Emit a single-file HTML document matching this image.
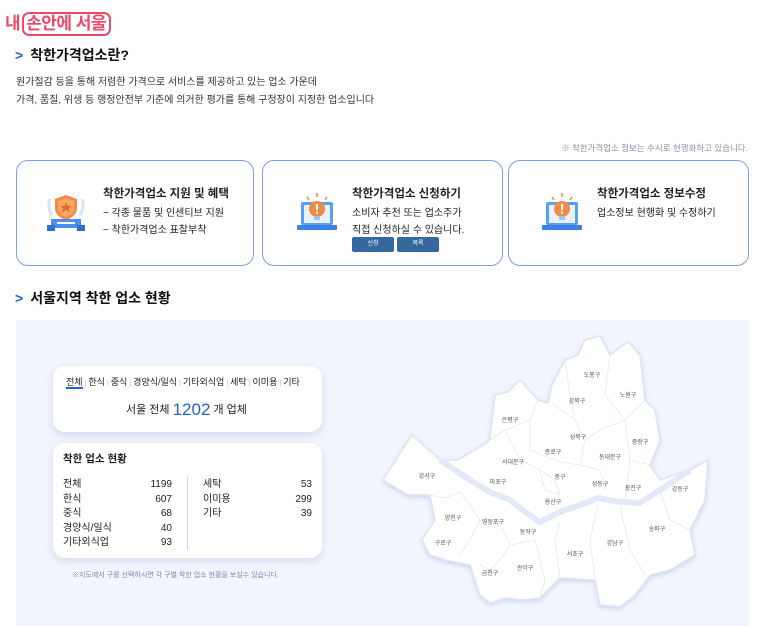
<!DOCTYPE html>
<html><head><meta charset="utf-8"><style>
*{margin:0;padding:0;box-sizing:border-box}
body{width:760px;height:626px;background:#fff;font-family:"Liberation Sans","Noto Sans CJK KR",sans-serif;color:#222;position:relative;overflow:hidden}
.a{position:absolute;white-space:nowrap}
.logo{left:5px;top:9px;font-size:17px;font-weight:bold;color:#ec4a6c;letter-spacing:-0.5px}
.logo span{border:2px solid #ec4a6c;border-radius:7px;padding:0 3px 1px 2px;margin-left:2px}
.h{font-size:14px;font-weight:bold;color:#111}
.h b{color:#2464c8;font-size:14px;margin-right:7px}
.p{font-size:10px;color:#333;line-height:18px}
.card{position:absolute;top:160px;height:106px;border:1.5px solid #7f9cf0;border-radius:12px;background:#fff}
.ct{font-size:11.5px;font-weight:bold;color:#222}
.cs{font-size:10px;color:#222;line-height:17px}
.btn{position:absolute;top:237px;height:15px;width:42px;background:#35699e;color:#fff;font-size:6px;text-align:center;line-height:15px;border-radius:2px}
.map{position:absolute;left:16px;top:320px;width:733px;height:306px;background:#f2f5fd}
.box{position:absolute;background:#fff;border-radius:12px;box-shadow:0 3px 8px rgba(120,140,190,0.25)}
.tb{font-size:9px;color:#222}
.tb i{color:#bbb;font-style:normal;font-size:7px;margin:0 2px}
.row{position:absolute;font-size:10px;color:#222}
.ml{font-size:6px;fill:#555;font-family:"Liberation Sans","Noto Sans CJK KR",sans-serif;text-anchor:middle}
</style></head><body>
<div class="a logo">내<span>손안에 서울</span></div>
<div class="a h" style="left:15px;top:45px"><b>&gt;</b>착한가격업소란?</div>
<div class="a p" style="left:16px;top:74px">원가절감 등을 통해 저렴한 가격으로 서비스를 제공하고 있는 업소 가운데<br>가격, 품질, 위생 등 행정안전부 기준에 의거한 평가를 통해 구청장이 지정한 업소입니다</div>
<div class="a" style="right:12px;top:142px;font-size:8.5px;color:#8a94a6">※ 착한가격업소 정보는 수시로 현행화하고 있습니다.</div>

<div class="card" style="left:16px;width:238px"></div>
<div class="card" style="left:262px;width:241px"></div>
<div class="card" style="left:508px;width:241px"></div>

<svg class="a" style="left:44px;top:191px" width="44" height="42" viewBox="0 0 44 42">
<path d="M6 8q-3 8 2 16M38 8q3 8-2 16" stroke="#d8e3f5" stroke-width="3" fill="none"/>
<path d="M22 4l11 4v9q0 8-11 12q-11-4-11-12V8z" fill="#f38a45"/>
<path d="M22 7l8 3v7q0 6-8 9q-8-3-8-9v-7z" fill="#f9a565"/>
<path d="M22 11l1.8 4h4l-3.2 2.4 1.2 4-3.8-2.5-3.8 2.5 1.2-4-3.2-2.4h4z" fill="#e26a2a"/>
<rect x="7" y="28" width="30" height="9" fill="#4b8ef0"/><rect x="3" y="34" width="8" height="6" fill="#2f6fd3"/><rect x="33" y="34" width="8" height="6" fill="#2f6fd3"/>
<rect x="13" y="31" width="18" height="2" fill="#fff"/></svg>
<div class="a ct" style="left:103px;top:185px">착한가격업소 지원 및 혜택</div>
<div class="a cs" style="left:103px;top:205px">− 각종 물품 및 인센티브 지원<br>− 착한가격업소 표찰부착</div>

<svg class="a" style="left:295px;top:192px" width="44" height="42" viewBox="0 0 44 42">
<rect x="6" y="10" width="32" height="23" rx="2" fill="#5aa0f0"/><rect x="9" y="13" width="26" height="18" fill="#e8f2ff"/>
<rect x="2" y="33" width="40" height="5" rx="1" fill="#3b82e8"/>
<circle cx="22" cy="17" r="8" fill="#f38a45"/><rect x="19" y="24" width="6" height="4" fill="#9cc5f5"/>
<rect x="21" y="12" width="2" height="6" fill="#fff"/><rect x="21" y="19.5" width="2" height="2" fill="#fff"/>
<path d="M22 1v4M12 5l2 3M32 5l-2 3" stroke="#f38a45" stroke-width="1.5"/></svg>
<div class="a ct" style="left:352px;top:185px">착한가격업소 신청하기</div>
<div class="a cs" style="left:352px;top:205px">소비자 추천 또는 업소주가<br>직접 신청하실 수 있습니다.</div>
<div class="btn" style="left:352px">신청</div><div class="btn" style="left:397px">목록</div>

<svg class="a" style="left:540px;top:192px" width="44" height="42" viewBox="0 0 44 42">
<rect x="6" y="10" width="32" height="23" rx="2" fill="#5aa0f0"/><rect x="9" y="13" width="26" height="18" fill="#e8f2ff"/>
<rect x="2" y="33" width="40" height="5" rx="1" fill="#3b82e8"/>
<circle cx="22" cy="17" r="8" fill="#f38a45"/><rect x="19" y="24" width="6" height="4" fill="#9cc5f5"/>
<rect x="21" y="12" width="2" height="6" fill="#fff"/><rect x="21" y="19.5" width="2" height="2" fill="#fff"/>
<path d="M22 1v4M12 5l2 3M32 5l-2 3" stroke="#f38a45" stroke-width="1.5"/></svg>
<div class="a ct" style="left:597px;top:185px">착한가격업소 정보수정</div>
<div class="a cs" style="left:597px;top:205px">업소정보 현행화 및 수정하기</div>

<div class="a h" style="left:15px;top:288px"><b>&gt;</b>서울지역 착한 업소 현황</div>

<div class="map"></div>
<div class="box" style="left:53px;top:366px;width:269px;height:66px"></div>
<div class="a tb" style="left:66px;top:375px">전체<i>|</i>한식<i>|</i>중식<i>|</i>경양식/일식<i>|</i>기타외식업<i>|</i>세탁<i>|</i>이미용<i>|</i>기타</div>
<div class="a" style="left:66px;top:387px;width:17px;height:2px;background:#2464c8"></div>
<div class="a" style="left:126px;top:400px;font-size:11px;color:#222">서울 전체 <span style="font-size:17px;color:#2464c8;vertical-align:-2px">1202</span> 개 업체</div>

<div class="box" style="left:53px;top:443px;width:269px;height:115px"></div>
<div class="a" style="left:63px;top:451px;font-size:10.5px;font-weight:bold">착한 업소 현황</div>
<div class="a" style="left:187px;top:477px;width:1px;height:73px;background:#c9d6ea"></div>
<div class="row" style="left:63px;top:478px;line-height:14.5px">전체<br>한식<br>중식<br>경양식/일식<br>기타외식업</div>
<div class="row" style="left:130px;width:42px;text-align:right;top:478px;line-height:14.5px">1199<br>607<br>68<br>40<br>93</div>
<div class="row" style="left:203px;top:478px;line-height:14.5px">세탁<br>이미용<br>기타</div>
<div class="row" style="left:270px;width:42px;text-align:right;top:478px;line-height:14.5px">53<br>299<br>39</div>
<div class="a" style="left:72px;top:570px;font-size:7px;color:#7a8bb0">※지도에서 구를 선택하시면 각 구별 착한 업소 현황을 보실수 있습니다.</div>

<svg class="a" style="left:0;top:0" width="760" height="626" viewBox="0 0 760 626">
<path d="M383 480L412 435L440 460L458 460L478 448L490 440L495 395L508 392L520 380L538 400L548 403L552 385L565 360L578 355L585 340L600 336L610 355L628 342L640 355L645 400L655 410L660 440L650 465L660 480L690 470L708 460L705 500L690 530L695 555L670 570L650 575L635 595L620 607L600 605L595 580L560 578L540 598L525 600L505 598L490 603L480 595L470 565L445 560L430 555L422 540L435 520L430 495L408 495Z" fill="#fff" stroke="#dfe4f2" stroke-width="1.5" style="filter:drop-shadow(0 2px 2px rgba(140,160,220,0.35))"/>
<path d="M440 460L470 480L490 492L510 500L525 512L540 522L560 512L580 505L598 498L620 502L640 503L660 490L690 470" fill="none" stroke="#e3e9f8" stroke-width="6"/>
<g fill="none" stroke="#e6e8ee" stroke-width="0.8">
<path d="M430 495L445 498L460 492L470 505L480 520L470 540L460 555"/>
<path d="M480 520L500 525L510 545L500 560L490 570L480 565"/>
<path d="M510 545L535 540L540 560L545 580L540 598"/>
<path d="M560 578L555 540L560 522"/>
<path d="M595 580L590 540L598 505"/><path d="M620 507L630 550L645 575"/><path d="M660 490L670 520L690 530"/>
<path d="M490 440L505 430L530 420L538 400"/><path d="M505 430L520 460L540 470L555 480L560 495"/>
<path d="M530 420L530 450L560 462L580 465L585 440L575 420L552 403"/>
<path d="M585 440L600 430L625 420L645 400"/><path d="M580 465L600 470L605 490"/><path d="M625 420L630 460L625 500"/><path d="M630 460L650 465"/>
<path d="M565 360L570 395L575 420"/><path d="M610 355L605 395L625 420"/><path d="M540 470L545 490L560 495"/>
</g>
<g class="ml">
<text x="592" y="377">도봉구</text><text x="628" y="397">노원구</text><text x="577" y="403">강북구</text><text x="510" y="422">은평구</text>
<text x="578" y="439">성북구</text><text x="640" y="444">중랑구</text><text x="553" y="454">종로구</text><text x="610" y="459">동대문구</text>
<text x="513" y="464">서대문구</text><text x="427" y="478">강서구</text><text x="560" y="479">중구</text><text x="498" y="484">마포구</text>
<text x="600" y="486">성동구</text><text x="633" y="490">광진구</text><text x="680" y="491">강동구</text><text x="553" y="504">용산구</text>
<text x="453" y="520">양천구</text><text x="493" y="524">영등포구</text><text x="528" y="534">동작구</text><text x="657" y="531">송파구</text>
<text x="443" y="545">구로구</text><text x="615" y="545">강남구</text><text x="575" y="556">서초구</text><text x="490" y="575">금천구</text><text x="525" y="570">관악구</text>
</g></svg>
</body></html>
